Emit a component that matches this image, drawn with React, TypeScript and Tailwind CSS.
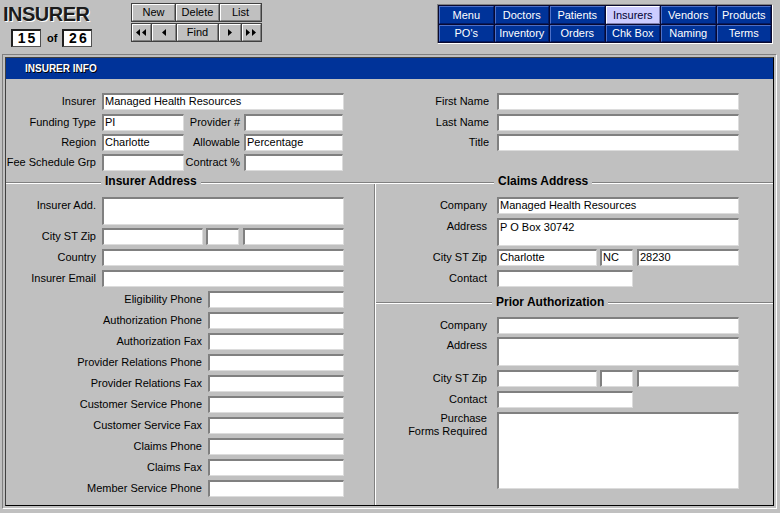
import React from 'react';

const inputCls =
  'bg-white border-t-2 border-l-2 border-t-[#808080] border-l-[#808080] border-b border-r border-b-[#dcdcdc] border-r-[#dcdcdc] pl-[1px] text-[11px] leading-[13px] whitespace-nowrap overflow-hidden shrink-0';

function Field({ className = '', value }: { className?: string; value?: string }) {
  return <div className={`${inputCls} ${className}`}>{value}</div>;
}

function Label({ className = '', children }: { className?: string; children: React.ReactNode }) {
  return <div className={`shrink-0 text-right whitespace-nowrap leading-[13px] ${className}`}>{children}</div>;
}

function Legend({ className = '', children }: { className?: string; children: React.ReactNode }) {
  return (
    <div className={`w-fit bg-[#c0c0c0] px-[4px] font-bold text-[12px] leading-[14px] h-[14px] ${className}`}>
      {children}
    </div>
  );
}

function Tri({ dir, count = 1 }: { dir: 'left' | 'right'; count?: number }) {
  const w = count === 2 ? 11 : 5;
  return (
    <svg width={w} height="7" viewBox={`0 0 ${w} 7`}>
      {dir === 'left' ? (
        <>
          <polygon points="4,0 0,3.5 4,7" fill="#000" />
          {count === 2 && <polygon points="10,0 6,3.5 10,7" fill="#000" />}
        </>
      ) : (
        <>
          <polygon points="0,0 4,3.5 0,7" fill="#000" />
          {count === 2 && <polygon points="6,0 10,3.5 6,7" fill="#000" />}
        </>
      )}
    </svg>
  );
}

const btnCls =
  'bg-[#c0c0c0] border-t border-l border-t-white border-l-white border-b border-r border-b-[#808080] border-r-[#808080] flex items-center justify-center text-[11px] leading-none';

function Counter({ children }: { children: React.ReactNode }) {
  return (
    <div className="w-[30px] h-[18px] bg-white border-t-2 border-l-2 border-t-[#202020] border-l-[#202020] border-b border-r border-b-[#505050] border-r-[#505050] flex items-center justify-center font-bold text-[14px] tracking-[2px] pl-[2px]">
      {children}
    </div>
  );
}

const navItems = [
  'Menu', 'Doctors', 'Patients', 'Insurers', 'Vendors', 'Products',
  "PO's", 'Inventory', 'Orders', 'Chk Box', 'Naming', 'Terms',
];

const phones = [
  'Eligibility Phone',
  'Authorization Phone',
  'Authorization Fax',
  'Provider Relations Phone',
  'Provider Relations Fax',
  'Customer Service Phone',
  'Customer Service Fax',
  'Claims Phone',
  'Claims Fax',
  'Member Service Phone',
];

export default function App() {
  return (
    <div className="w-[780px] h-[513px] bg-[#c0c0c0] overflow-hidden font-['Liberation_Sans',Arial,sans-serif] text-[11px] text-black">
      {/* header */}
      <div className="h-[54px] flex">
        <div className="w-[131px] shrink-0 pl-[3px] pt-[3px]">
          <div className="text-[20px] font-bold leading-[22px] tracking-[-0.5px] text-[#1c1c1c] [text-shadow:1px_1px_0_#ffffff]">
            INSURER
          </div>
          <div className="flex items-center mt-[4px] ml-[8px]">
            <Counter>15</Counter>
            <span className="font-bold text-[11px] ml-[6px] mr-[5px]">of</span>
            <Counter>26</Counter>
          </div>
        </div>

        <div className="w-[131px] shrink-0 pt-[3px]">
          <div className="flex h-[19px] border border-[#404040] bg-[#404040] gap-[1px]">
            <div className={`${btnCls} w-[43px]`}>New</div>
            <div className={`${btnCls} w-[43px]`}>Delete</div>
            <div className={`${btnCls} flex-1`}>List</div>
          </div>
          <div className="flex h-[19px] mt-[1px] border border-[#404040] bg-[#404040] gap-[1px]">
            <div className={`${btnCls} w-[19px]`}><Tri dir="left" count={2} /></div>
            <div className={`${btnCls} w-[24px]`}><Tri dir="left" /></div>
            <div className={`${btnCls} w-[41px]`}>Find</div>
            <div className={`${btnCls} w-[22px]`}><Tri dir="right" /></div>
            <div className={`${btnCls} flex-1`}><Tri dir="right" count={2} /></div>
          </div>
        </div>

        <div className="ml-[175px] mt-[4px] w-[336px] h-[40px] border border-t-[#808080] border-l-[#808080] border-b-white border-r-white">
          <div className="h-full bg-[#0a0a30] p-[1px] grid grid-cols-6 grid-rows-2 gap-[1px]">
            {navItems.map((n) =>
              n === 'Insurers' ? (
                <div
                  key={n}
                  className="bg-[#ccccff] border-t border-l border-t-white border-l-white border-b border-r border-b-[#8080b0] border-r-[#8080b0] text-[#000033] text-[11px] flex items-center justify-center"
                >
                  {n}
                </div>
              ) : (
                <div
                  key={n}
                  className="bg-[#003399] border-t border-l border-t-[#4d70c8] border-l-[#4d70c8] border-b border-r border-b-[#001a66] border-r-[#001a66] text-white text-[11px] flex items-center justify-center"
                >
                  {n}
                </div>
              )
            )}
          </div>
        </div>
      </div>

      {/* panel */}
      <div className="ml-[2px] w-[775px] h-[455px] border border-t-[#808080] border-l-[#808080] border-b-white border-r-white p-[2px]">
        <div className="h-full border border-t-[#404040] border-l-[#404040] border-b-black border-r-black flex flex-col">
          <div className="h-[21px] shrink-0 bg-[#003399] pl-[19px] text-white font-bold text-[10px] leading-[21px] [text-shadow:1px_1px_0_#000]">
            INSURER INFO
          </div>

          {/* top section */}
          <div className="h-[104px] shrink-0 border-b border-b-[#808080] flex pt-[14px]">
            <div className="w-[370px] shrink-0">
              <div className="flex items-center h-[17px]">
                <Label className="w-[90px]">Insurer</Label>
                <Field className="ml-[6px] w-[242px] h-[17px]" value="Managed Health Resources" />
              </div>
              <div className="flex items-center h-[17px] mt-[4px]">
                <Label className="w-[90px]">Funding Type</Label>
                <Field className="ml-[6px] w-[82px] h-[17px]" value="PI" />
                <Label className="w-[56px]">Provider #</Label>
                <Field className="ml-[4px] w-[99px] h-[17px]" />
              </div>
              <div className="flex items-center h-[17px] mt-[3px]">
                <Label className="w-[90px]">Region</Label>
                <Field className="ml-[6px] w-[82px] h-[17px]" value="Charlotte" />
                <Label className="w-[56px]">Allowable</Label>
                <Field className="ml-[4px] w-[99px] h-[17px]" value="Percentage" />
              </div>
              <div className="flex items-center h-[17px] mt-[3px]">
                <Label className="w-[90px]">Fee Schedule Grp</Label>
                <Field className="ml-[6px] w-[82px] h-[17px]" />
                <Label className="w-[56px]">Contract %</Label>
                <Field className="ml-[4px] w-[99px] h-[17px]" />
              </div>
            </div>
            <div className="flex-1">
              <div className="flex items-center h-[17px]">
                <Label className="w-[113px]">First Name</Label>
                <Field className="ml-[8px] w-[242px] h-[17px]" />
              </div>
              <div className="flex items-center h-[17px] mt-[4px]">
                <Label className="w-[113px]">Last Name</Label>
                <Field className="ml-[8px] w-[242px] h-[17px]" />
              </div>
              <div className="flex items-center h-[17px] mt-[3px]">
                <Label className="w-[113px]">Title</Label>
                <Field className="ml-[8px] w-[242px] h-[17px]" />
              </div>
            </div>
          </div>

          {/* lower sections */}
          <div className="flex-1 flex border-t border-t-white">
            {/* insurer address */}
            <div className="w-[369px] shrink-0 border-r border-r-[#808080] flex flex-col">
              <Legend className="-mt-[10px] ml-[95px]">Insurer Address</Legend>
              <div className="flex items-start h-[28px] mt-[9px]">
                <Label className="w-[90px] pt-[2px]">Insurer Add.</Label>
                <Field className="ml-[6px] w-[242px] h-[28px]" />
              </div>
              <div className="flex items-center h-[17px] mt-[3px]">
                <Label className="w-[90px]">City ST Zip</Label>
                <Field className="ml-[6px] w-[101px] h-[17px]" />
                <Field className="ml-[3px] w-[33px] h-[17px]" />
                <Field className="ml-[4px] w-[101px] h-[17px]" />
              </div>
              <div className="flex items-center h-[17px] mt-[4px]">
                <Label className="w-[90px]">Country</Label>
                <Field className="ml-[6px] w-[242px] h-[17px]" />
              </div>
              <div className="flex items-center h-[17px] mt-[4px]">
                <Label className="w-[90px]">Insurer Email</Label>
                <Field className="ml-[6px] w-[242px] h-[17px]" />
              </div>
              {phones.map((p) => (
                <div key={p} className="flex items-center h-[17px] mt-[4px]">
                  <Label className="w-[196px]">{p}</Label>
                  <Field className="ml-[6px] w-[136px] h-[17px]" />
                </div>
              ))}
            </div>

            {/* claims + prior auth */}
            <div className="flex-1 border-l border-l-white flex flex-col">
              <div className="border-b border-b-[#808080] pb-[15px] flex flex-col">
                <Legend className="-mt-[10px] ml-[118px]">Claims Address</Legend>
                <div className="flex items-center h-[17px] mt-[9px]">
                  <Label className="w-[111px]">Company</Label>
                  <Field className="ml-[10px] w-[242px] h-[17px]" value="Managed Health Resources" />
                </div>
                <div className="flex items-start h-[28px] mt-[4px]">
                  <Label className="w-[111px] pt-[2px]">Address</Label>
                  <Field className="ml-[10px] w-[242px] h-[28px] pt-[1px]" value="P O Box 30742" />
                </div>
                <div className="flex items-center h-[17px] mt-[3px]">
                  <Label className="w-[111px]">City ST Zip</Label>
                  <Field className="ml-[10px] w-[100px] h-[17px]" value="Charlotte" />
                  <Field className="ml-[3px] w-[33px] h-[17px]" value="NC" />
                  <Field className="ml-[4px] w-[102px] h-[17px]" value="28230" />
                </div>
                <div className="flex items-center h-[17px] mt-[4px]">
                  <Label className="w-[111px]">Contact</Label>
                  <Field className="ml-[10px] w-[136px] h-[17px]" />
                </div>
              </div>

              <div className="flex-1 border-t border-t-white flex flex-col">
                <Legend className="-mt-[9px] ml-[116px]">Prior Authorization</Legend>
                <div className="flex items-center h-[17px] mt-[8px]">
                  <Label className="w-[111px]">Company</Label>
                  <Field className="ml-[10px] w-[242px] h-[17px]" />
                </div>
                <div className="flex items-start h-[29px] mt-[3px]">
                  <Label className="w-[111px] pt-[2px]">Address</Label>
                  <Field className="ml-[10px] w-[242px] h-[29px]" />
                </div>
                <div className="flex items-center h-[17px] mt-[4px]">
                  <Label className="w-[111px]">City ST Zip</Label>
                  <Field className="ml-[10px] w-[100px] h-[17px]" />
                  <Field className="ml-[3px] w-[33px] h-[17px]" />
                  <Field className="ml-[4px] w-[102px] h-[17px]" />
                </div>
                <div className="flex items-center h-[17px] mt-[4px]">
                  <Label className="w-[111px]">Contact</Label>
                  <Field className="ml-[10px] w-[136px] h-[17px]" />
                </div>
                <div className="flex items-start h-[77px] mt-[4px]">
                  <Label className="w-[111px] leading-[12px]">
                    Purchase
                    <br />
                    Forms Required
                  </Label>
                  <Field className="ml-[10px] w-[242px] h-[77px]" />
                </div>
              </div>
            </div>
          </div>
        </div>
      </div>
    </div>
  );
}
